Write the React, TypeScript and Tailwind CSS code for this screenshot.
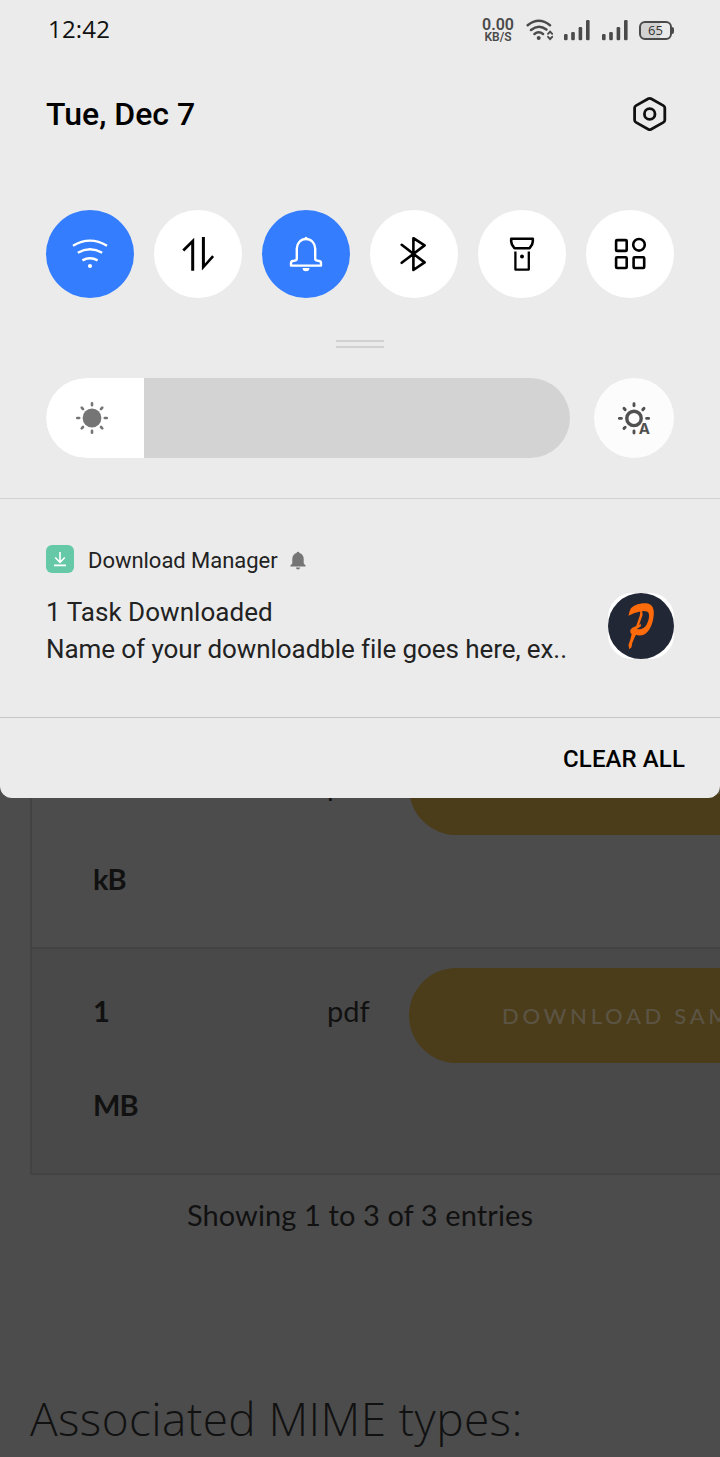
import type { ReactNode } from "react";

function StatusBar() {
  return (
    <div className="flex h-15 items-start pl-12 text-[#4a4a4a]">
      <span className="mt-[12px] w-[434px] font-['Open_Sans',sans-serif] text-2xl leading-[34px] tracking-[0.2px] text-[#111]">12:42</span>
      <div className="mt-[17px] flex w-8 flex-col items-center font-['Roboto',sans-serif] whitespace-nowrap">
        <span className="text-[16px] leading-[15px] font-semibold">0.00</span>
        <span className="text-[12px] leading-[11px] font-semibold">KB/S</span>
      </div>
      <svg className="mt-[18px] ml-3" width="28" height="24" viewBox="526 18 28 24" fill="none" stroke="currentColor" strokeWidth="2.5" strokeLinecap="round">
        <path d="M527.7 25.3Q538.8 16.3 550 25.3M531 30Q538.8 23.8 546.4 29.6M534.5 34Q538.7 30.6 543 34" />
        <circle cx="538.7" cy="38" r="2" fill="currentColor" stroke="none" />
        <path d="M548 33.8l2.1-2.2 2.1 2.2M548 36.8l2.1 2.2 2.1-2.2" strokeWidth="1.9" />
      </svg>
      <Signal className="mt-[18px] ml-[9px]" />
      <Signal className="mt-[18px] ml-[10px]" />
      <div className="relative mt-[21px] ml-[10px] flex h-[18.5px] w-[33px] items-center justify-center rounded-[6px] border-2 border-[#4a4a4a] bg-linear-to-r from-[#d2d2d2] from-65% to-transparent to-65%">
        <span className="font-['Open_Sans',sans-serif] text-[13px] leading-none text-[#333]">65</span>
        <span className="absolute top-[4px] -right-[3.5px] h-[7px] w-[2px] rounded-r-full bg-[#4a4a4a]" />
      </div>
    </div>
  );
}

function Signal({ className }: { className: string }) {
  return (
    <svg className={className} width="28" height="24" viewBox="0 0 28 24" fill="currentColor">
      <rect x="1" y="16" width="3.6" height="6.2" rx="1.2" />
      <rect x="8.2" y="14" width="3.6" height="8.2" rx="1.2" />
      <rect x="15.6" y="9" width="3.6" height="13.2" rx="1.2" />
      <rect x="23" y="2" width="3.6" height="20.2" rx="1.2" />
    </svg>
  );
}

function Toggle({ active = false, children }: { active?: boolean; children: ReactNode }) {
  return (
    <button className={active ? "size-[88px] rounded-full bg-[#347dff] text-white" : "size-[88px] rounded-full bg-white text-black"}>
      <svg width="88" height="88" viewBox="0 0 88 88" fill="none" stroke="currentColor" strokeWidth="2.6">
        {children}
      </svg>
    </button>
  );
}

function Toggles() {
  return (
    <div className="mt-[70px] flex gap-5 px-[46px]">
      <Toggle active>
        <path d="M27 35.8Q44 25.4 61 35.8M31.8 42.8Q44 35.8 56.2 42.8M36.4 50.4Q44 46 51.6 50.4" strokeWidth="2.4" />
        <circle cx="44" cy="56" r="2.1" fill="currentColor" stroke="none" />
      </Toggle>
      <Toggle>
        <path d="M40.2 60.8h-3V34.4l-6.9 7.2-2-2L40.2 27.8zM47.9 27h3v26.6l7.2-8.4 2 1.8-12.2 13.4z" fill="currentColor" stroke="none" />
      </Toggle>
      <Toggle active>
        <path d="M34.8 38.4a9.2 9.4 0 0 1 18.4 0v10.3q0 1.7 2.6 2q3.2.2 3.2 2v2.9H29v-2.9q0-1.8 3.2-2q2.6-.3 2.6-2z" strokeWidth="2.4" strokeLinejoin="round" />
        <path d="M40.6 58h6.8a3.4 3.2 0 0 1-6.8 0z" fill="currentColor" stroke="none" />
        <circle cx="44" cy="28.2" r="1.5" fill="currentColor" stroke="none" />
      </Toggle>
      <Toggle>
        <path d="M31.7 34.8L54.6 52.4 43.4 60V28.2L54.6 35.4 31.7 52.8" strokeLinecap="round" strokeLinejoin="round" />
      </Toggle>
      <Toggle>
        <path d="M33.2 28.8h21.6v2.8q0 3.2-3.2 6.6H36.4q-3.2-3.4-3.2-6.6z" strokeLinejoin="round" />
        <path d="M37.4 41.6v18h13.4v-18" strokeLinejoin="round" strokeWidth="2.3" />
        <circle cx="44" cy="46.5" r="2" fill="currentColor" stroke="none" />
      </Toggle>
      <Toggle>
        <rect x="30.1" y="30.1" width="10.6" height="10.8" rx="1" />
        <circle cx="53" cy="34.8" r="5.8" />
        <rect x="30.1" y="47.2" width="10.6" height="10.8" rx="1" />
        <rect x="47.6" y="47.2" width="10.6" height="10.8" rx="1" />
      </Toggle>
    </div>
  );
}

function Brightness() {
  return (
    <div className="mt-[30px] flex gap-6 px-[46px]">
      <div className="flex h-20 w-[524px] overflow-hidden rounded-full bg-[#d3d3d3]">
        <div className="flex w-[98px] items-center bg-white pl-[29px]">
          <svg width="34" height="34" viewBox="-17 -17 34 34" fill="none" stroke="#757575" strokeWidth="2.6" strokeLinecap="round">
            <circle r="9.4" fill="#757575" stroke="none" />
            <path d="M0-14.8v2M0 14.8v-2M-14.8 0h2M14.8 0h-2M-10.3-10.3l1.3 1.3M10.3-10.3L9-9M-10.3 10.3L-9 9M10.3 10.3L9 9" />
          </svg>
        </div>
      </div>
      <button className="flex size-20 items-center justify-center rounded-full bg-[#fcfcfc]">
        <svg width="40" height="40" viewBox="-20 -20.4 40 40" fill="none" stroke="#505050" strokeWidth="2.9" strokeLinecap="round">
          <circle r="7.2" strokeWidth="3.4" />
          <path d="M0-14.6v2M0 14.6v-2M-14.6 0h2M14.6 0h-2M-10-10l1.2 1.2M10-10L8.8-8.8M-10 10L-8.8 8.8" />
          <text x="4.8" y="15.4" stroke="#fcfcfc" strokeWidth="2" paintOrder="stroke" fill="#505050" className="font-['Inter',sans-serif] text-[15px] font-bold">A</text>
        </svg>
      </button>
    </div>
  );
}

function Notification() {
  return (
    <div className="h-[218px] pl-[46px] font-['Roboto',sans-serif] text-[#222]">
      <div className="flex h-[74px] items-end">
        <svg width="28" height="28" viewBox="0 0 28 28" fill="none" stroke="#fff" strokeWidth="1.6">
          <rect width="28" height="28" rx="6" fill="#65c8a6" stroke="none" />
          <path d="M14 7v10M9.2 12.5L14 17.4l4.8-4.9M8 20.4h12" />
        </svg>
        <span className="ml-[14px] h-7 text-[22px] leading-[31px] tracking-[-0.03px]">Download Manager</span>
        <svg className="mb-[2px] ml-3" width="16" height="20" viewBox="0 0 16 20" fill="#757575">
          <path d="M8 .8q1.3 0 1.4 1.3Q13.6 3.4 13.7 8v4.6l1.9 2v.9H.4v-.9l1.9-2V8Q2.4 3.4 6.6 2.1 6.7.8 8 .8zM6 16.4h4a2 2 0 0 1-4 0z" />
        </svg>
      </div>
      <div className="mt-5 flex">
        <div className="w-[562px] pt-px text-[26px] leading-[37px] whitespace-nowrap">
          <p className="tracking-[0.04px]">1 Task Downloaded</p>
          <p className="tracking-[-0.08px]">Name of your downloadble file goes here, ex..</p>
        </div>
        <svg width="66" height="66" viewBox="0 0 66 66">
          <rect width="66" height="66" rx="24" fill="#fff" />
          <circle cx="33" cy="33" r="33" fill="#222735" />
          <path
            fill="#ff6a0a"
            fillRule="evenodd"
            d="M20.5 22.8Q21.5 18 22.8 15.6C25.5 12 32.5 9.7 38.5 10.3C45 11 46.5 17 45.6 23C44.8 31 41.6 38.4 36.2 41.5C33.3 43 30 42.8 28 41.8L26.2 45.2Q24 49.5 23.5 54.2L21.3 56.2L20.5 52Q22.8 46 23.6 41.2C21.5 39 21.8 36.4 24.3 34.7L28.2 33L31.8 22.5L32.3 18.5Q26.5 19.2 20.5 22.8ZM34.2 18.1L34.6 22L31 32.2L32.6 30.6L33 33.2L28.8 36Q35 37.6 38.7 31.5Q42.2 24 40.6 20Q39.4 17.8 34.2 18.1Z"
          />
        </svg>
      </div>
    </div>
  );
}

function Shade() {
  return (
    <section className="relative z-10 flex h-[798px] flex-col overflow-hidden rounded-b-[12px] bg-[#ebebeb]">
      <StatusBar />
      <div className="mt-[34px] flex h-[46px] items-start justify-between pr-[52px] pl-[46px]">
        <h1 className="font-['Roboto',sans-serif] text-[32px] leading-10 font-medium text-black">Tue, Dec 7</h1>
        <svg className="mt-[2px]" width="36" height="36" viewBox="632 96 36 36" fill="none" stroke="#111" strokeWidth="2.8" strokeLinejoin="round">
          <path d="M648.2 98.8q1.5-.8 3 0l12.2 6.8q1.4.8 1.4 2.4v12q0 1.6-1.4 2.4l-12.2 6.8q-1.5.8-3 0l-12.2-6.8q-1.4-.8-1.4-2.4v-12q0-1.6 1.4-2.4z" />
          <circle cx="649.7" cy="114" r="5.3" />
        </svg>
      </div>
      <Toggles />
      <div className="mx-auto mt-[42px] h-2 w-12 shrink-0 border-y-2 border-[#d2d2d2]" />
      <Brightness />
      <div className="mt-10 h-px shrink-0 bg-[#d0d0d0]" />
      <Notification />
      <div className="h-px shrink-0 bg-[#c6c6c6]" />
      <div className="flex h-20 items-center justify-end pt-[2px] pr-[35px]">
        <button className="font-['Roboto',sans-serif] text-2xl font-medium tracking-[0.1px] text-black">CLEAR ALL</button>
      </div>
    </section>
  );
}

function Row({ size, unit, className, buttonClass }: { size: string; unit: string; className: string; buttonClass: string }) {
  return (
    <div className={"flex h-[226px] items-start border-b-2 border-[#434343] pl-[61px] text-[29px] leading-[94px] text-[#111] " + className}>
      <div className="w-[234px] shrink-0 pt-[15px] font-bold tracking-[-1px]">
        <div>{size}</div>
        <div>{unit}</div>
      </div>
      <div className="w-[82px] shrink-0 pt-[15px]">pdf</div>
      <div className={"h-[95px] w-[480px] shrink-0 rounded-full bg-[#4c3d1a] pl-[93px] text-[22px] leading-[96px] font-medium tracking-[3.7px] whitespace-nowrap text-[#5b5444] " + buttonClass}>
        DOWNLOAD SAMPLE
      </div>
    </div>
  );
}

export default function App() {
  return (
    <div className="h-[1457px] w-[720px] overflow-hidden bg-[#4c4c4c]">
      <Shade />
      <main className="-mt-[75px] font-['Lato',sans-serif] text-[#111]">
        <div className="ml-[30px] overflow-hidden border-l-2 border-[#434343]">
          <Row size="500" unit="kB" className="" buttonClass="mt-[17px]" />
          <Row size="1" unit="MB" className="bg-[#494949]" buttonClass="mt-[19px]" />
        </div>
        <p className="mt-[20px] text-center text-[29px] leading-10 tracking-[0.1px]">Showing 1 to 3 of 3 entries</p>
        <h2 className="mt-[153px] ml-[30px] font-['Open_Sans',sans-serif] text-[46px] leading-[60px] font-light tracking-[0.4px] whitespace-nowrap">Associated MIME types:</h2>
      </main>
    </div>
  );
}
